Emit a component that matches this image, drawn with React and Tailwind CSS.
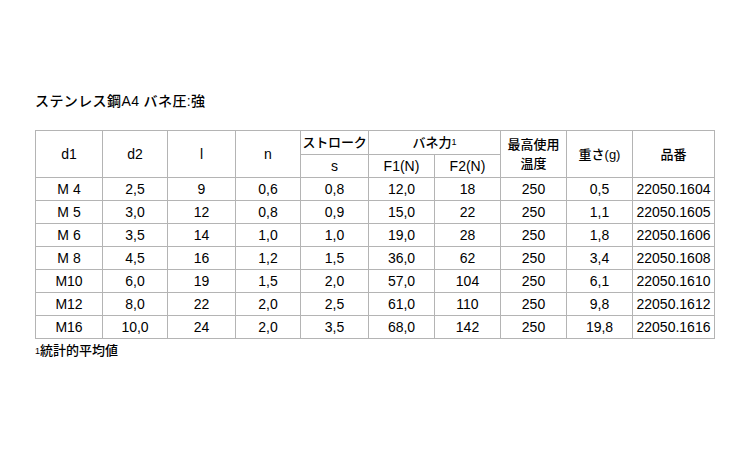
const rows = [
  ['M\u00a04', '2,5', '9', '0,6', '0,8', '12,0', '18', '250', '0,5', '22050.1604'],
  ['M\u00a05', '3,0', '12', '0,8', '0,9', '15,0', '22', '250', '1,1', '22050.1605'],
  ['M\u00a06', '3,5', '14', '1,0', '1,0', '19,0', '28', '250', '1,8', '22050.1606'],
  ['M\u00a08', '4,5', '16', '1,2', '1,5', '36,0', '62', '250', '3,4', '22050.1608'],
  ['M10', '6,0', '19', '1,5', '2,0', '57,0', '104', '250', '6,1', '22050.1610'],
  ['M12', '8,0', '22', '2,0', '2,5', '61,0', '110', '250', '9,8', '22050.1612'],
  ['M16', '10,0', '24', '2,0', '3,5', '68,0', '142', '250', '19,8', '22050.1616'],
]

const widths = [67, 65, 68, 65, 68, 66, 66, 66, 66, 82]

const cell = 'border border-[#b4b4b4] p-0 text-center align-middle'
const jp = "font-['Liberation_Sans','Noto_Sans_CJK_JP',sans-serif]"

export default function App() {
  return (
    <div className={`min-h-screen w-[750px] bg-white pl-[35px] pt-[91px] text-black ${jp}`}>
      <h1 className="h-[20px] text-[14px] font-medium leading-[20px] tracking-[0.4px]">ステンレス鋼A4 バネ圧:強</h1>

      <table className="mt-[19px] table-fixed border-collapse border border-[#707070] text-[14px] leading-none">
        <colgroup>
          {widths.map((w, i) => (
            <col key={i} style={{ width: w }} />
          ))}
        </colgroup>
        <thead>
          <tr className="h-[24px]">
            <th rowSpan={2} className={`${cell} font-normal`}>d1</th>
            <th rowSpan={2} className={`${cell} font-normal`}>d2</th>
            <th rowSpan={2} className={`${cell} font-normal`}>l</th>
            <th rowSpan={2} className={`${cell} font-normal`}>n</th>
            <th className={`${cell} text-[13px] font-medium tracking-[-0.2px]`}>ストローク</th>
            <th colSpan={2} className={`${cell} text-[13px] font-medium`}>
              バネ力<sup className="relative -top-[2px] text-[9px] font-normal">1</sup>
            </th>
            <th rowSpan={2} className={`${cell} text-[13px] font-medium leading-[19px]`}>
              最高使用
              <br />
              温度
            </th>
            <th rowSpan={2} className={`${cell} text-[13px] font-medium`}>重さ(g)</th>
            <th rowSpan={2} className={`${cell} text-[13px] font-medium`}>品番</th>
          </tr>
          <tr className="h-[23px]">
            <th className={`${cell} font-normal`}>s</th>
            <th className={`${cell} font-normal`}>F1(N)</th>
            <th className={`${cell} font-normal`}>F2(N)</th>
          </tr>
        </thead>
        <tbody>
          {rows.map((r) => (
            <tr key={r[9]} className="h-[23px]">
              {r.map((v, i) => (
                <td key={i} className={cell}>
                  {v}
                </td>
              ))}
            </tr>
          ))}
        </tbody>
      </table>

      <p className="mt-[3px] h-[18px] text-[13px] font-medium leading-[18px]">
        <sup className="relative -top-[1px] text-[9px] font-normal">1</sup>統計的平均値
      </p>
    </div>
  )
}
